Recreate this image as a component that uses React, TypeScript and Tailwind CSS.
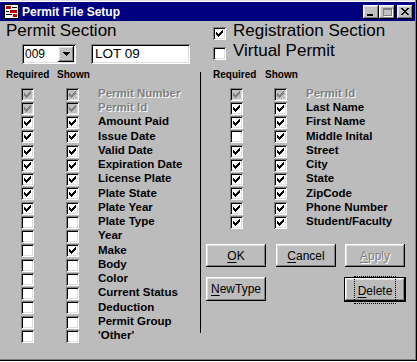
import type { ReactNode } from 'react'

const sunken = 'shadow-[inset_1px_1px_0_#808080,inset_-1px_-1px_0_#fff,inset_2px_2px_0_#000,inset_-2px_-2px_0_#dfdfdf]'
const raised = 'shadow-[inset_-1px_-1px_0_#000,inset_1px_1px_0_#fff,inset_-2px_-2px_0_#808080,inset_2px_2px_0_#dfdfdf]'
const etched = 'text-[#808080] [text-shadow:1px_1px_0_#fff]'

type Row = [string, number, number] // 0 off, 1 on, 2 disabled+checked

const leftRows: Row[] = [
  ['Permit Number', 2, 2],
  ['Permit Id', 2, 2],
  ['Amount Paid', 1, 1],
  ['Issue Date', 1, 1],
  ['Valid Date', 1, 1],
  ['Expiration Date', 1, 1],
  ['License Plate', 1, 1],
  ['Plate State', 1, 1],
  ['Plate Year', 1, 1],
  ['Plate Type', 0, 0],
  ['Year', 0, 0],
  ['Make', 0, 1],
  ['Body', 0, 0],
  ['Color', 0, 0],
  ['Current Status', 0, 0],
  ['Deduction', 0, 0],
  ['Permit Group', 0, 0],
  ["'Other'", 0, 0],
]

const rightRows: Row[] = [
  ['Permit Id', 2, 2],
  ['Last Name', 1, 1],
  ['First Name', 1, 1],
  ['Middle Inital', 0, 1],
  ['Street', 1, 1],
  ['City', 1, 1],
  ['State', 1, 1],
  ['ZipCode', 1, 1],
  ['Phone Number', 1, 1],
  ['Student/Faculty', 1, 1],
]

function Check({ state }: { state: number }) {
  const disabled = state === 2
  return (
    <span className={`block w-[13px] h-[13px] shrink-0 ${disabled ? 'bg-[#c0c0c0]' : 'bg-white'} ${sunken}`}>
      {state > 0 && (
        <svg width="13" height="13" viewBox="0 0 13 13" shapeRendering="crispEdges" fill={disabled ? '#808080' : '#000'}>
          <rect x="9" y="3" width="1" height="1" />
          <rect x="8" y="4" width="2" height="1" />
          <rect x="3" y="5" width="1" height="1" />
          <rect x="7" y="5" width="3" height="1" />
          <rect x="3" y="6" width="2" height="1" />
          <rect x="6" y="6" width="3" height="1" />
          <rect x="3" y="7" width="5" height="1" />
          <rect x="4" y="8" width="3" height="1" />
          <rect x="5" y="9" width="1" height="1" />
        </svg>
      )}
    </span>
  )
}

function FieldRow({ row, i, right }: { row: Row; i: number; right?: boolean }) {
  const [label, req, shown] = row
  return (
    <div className={`flex items-center ${i % 4 === 3 ? 'h-[15px]' : 'h-[14px]'} ${right ? 'pl-[29px]' : 'pl-[21px]'}`}>
      <Check state={req} />
      <span className={right ? 'ml-[31px]' : 'ml-[32px]'}>
        <Check state={shown} />
      </span>
      <span className={`ml-[19px] text-[11.5px] font-bold leading-none whitespace-nowrap ${req === 2 ? etched : 'text-black'}`}>
        {label}
      </span>
    </div>
  )
}

function Header({ right }: { right?: boolean }) {
  return (
    <div className={`flex h-[12px] leading-[12px] text-[10px] font-bold ${right ? 'pl-[12px]' : 'pl-[6px]'}`}>
      <span className={right ? 'w-[52px]' : 'w-[51px]'}>Required</span>
      <span>Shown</span>
    </div>
  )
}

function Btn({ label, disabled, def, tall }: { label: string; disabled?: boolean; def?: boolean; tall?: boolean }) {
  const text = (
    <span className={`text-[12px] leading-none ${disabled ? etched : 'text-black'}`}>
      <span className="underline underline-offset-[2px]">{label[0]}</span>
      {label.slice(1)}
    </span>
  )
  const inner = (
    <div className={`flex items-center justify-center w-[60px] ${tall ? 'h-[24px]' : 'h-[23px]'} bg-[#bcbcbc] ${raised}`}>
      {def ? <span className="border border-dotted border-black px-[3px] py-[1px]">{text}</span> : text}
    </div>
  )
  if (def) return <div className="border border-black">{inner}</div>
  return inner
}

function TitleButton({ children }: { children: ReactNode }) {
  return (
    <div className={`w-[16px] h-[14px] bg-[#c0c0c0] flex items-center justify-center ${raised}`}>{children}</div>
  )
}

function Row2({ checked, children }: { checked: boolean; children: ReactNode }) {
  return (
    <div className="flex items-start h-[20px]">
      <span className="mt-[6px]">
        <Check state={checked ? 1 : 0} />
      </span>
      <span className="ml-[7px] text-[17px] leading-[20px] whitespace-nowrap">{children}</span>
    </div>
  )
}

export default function App() {
  return (
    <div className="w-[417px] h-[361px] bg-[#bcbcbc] pt-[2px] pr-[2px] flex flex-col font-['Liberation_Sans',Arial,sans-serif] text-black shadow-[inset_-1px_-1px_0_#000,inset_-2px_-2px_0_#808080,inset_0_1px_0_#dfdfdf,inset_0_2px_0_#fff]">
      {/* title bar */}
      <div className="h-[19px] bg-[#000080] flex items-center pl-[4px] pr-[2px]">
        <svg width="15" height="15" viewBox="0 0 15 15" shapeRendering="crispEdges">
          <rect x="0" y="0" width="15" height="15" fill="#fff" />
          <rect x="0.5" y="0.5" width="14" height="14" fill="none" stroke="#000" />
          <rect x="2" y="2" width="5" height="3" fill="#c00000" />
          <rect x="8" y="3" width="5" height="1" fill="#000" />
          <rect x="2" y="7" width="3" height="1" fill="#000" />
          <rect x="6" y="6" width="7" height="3" fill="#c00000" />
          <rect x="2" y="10" width="6" height="1" fill="#000" />
          <rect x="9" y="10" width="4" height="3" fill="#c00000" />
        </svg>
        <span className="ml-[3px] text-[12px] font-bold text-white leading-none">Permit File Setup</span>
        <div className="ml-auto flex items-center">
          <TitleButton>
            <span className="block w-[6px] h-[2px] bg-black mt-[6px] -ml-[2px]" />
          </TitleButton>
          <TitleButton>
            <span className="block w-[9px] h-[8px] border border-t-2 border-[#808080] shadow-[1px_1px_0_#fff]" />
          </TitleButton>
          <div className="ml-[2px]">
            <TitleButton>
              <svg width="8" height="7" viewBox="0 0 8 7" shapeRendering="crispEdges" fill="#000">
                <path d="M0 0h2v1h1v1h2V1h1V0h2v1H7v1H6v1H5v1h1v1h1v1h1v1H6V6H5V5H3v1H2v1H0V6h1V5h1V4h1V3H2V2H1V1H0z" />
              </svg>
            </TitleButton>
          </div>
        </div>
      </div>

      {/* top section */}
      <div className="flex">
        <div className="w-[200px] shrink-0">
          <div className="h-[20px] leading-[20px] text-[17px] pl-[6px]">Permit Section</div>
          <div className="flex mt-[3px] pl-[22px]">
            <div className={`w-[54px] h-[20px] bg-white flex items-center pl-[3px] pr-[2px] ${sunken}`}>
              <span className="text-[12px] leading-none flex-1">009</span>
              <div className={`w-[16px] h-[16px] bg-[#c0c0c0] flex items-center justify-center ${raised}`}>
                <svg width="7" height="4" viewBox="0 0 7 4" shapeRendering="crispEdges" fill="#000">
                  <path d="M0 0h7v1H6v1H5v1H4v1H3V3H2V2H1V1H0z" />
                </svg>
              </div>
            </div>
            <div className={`ml-[15px] w-[99px] h-[20px] bg-white flex items-center pl-[4px] ${sunken}`}>
              <span className="text-[13.5px] leading-none">LOT 09</span>
            </div>
          </div>
        </div>
        <div className="pl-[13px]">
          <Row2 checked>Registration Section</Row2>
          <Row2 checked={false}>Virtual Permit</Row2>
        </div>
      </div>

      {/* lists */}
      <div className="flex mt-[5px]">
        <div className="w-[200px] shrink-0">
          <Header />
          <div className="mt-[6px]">
            {leftRows.map((r, i) => (
              <FieldRow key={r[0]} row={r} i={i} />
            ))}
          </div>
        </div>
        <div className="w-px h-[261px] mt-[3px] bg-black shrink-0" />
        <div className="flex-1">
          <Header right />
          <div className="mt-[6px]">
            {rightRows.map((r, i) => (
              <FieldRow key={r[0]} row={r} i={i} right />
            ))}
          </div>
          <div className="pl-[5px] mt-[15px] flex">
            <Btn label="OK" />
            <div className="ml-[10px]">
              <Btn label="Cancel" />
            </div>
            <div className="ml-[9px]">
              <Btn label="Apply" disabled />
            </div>
          </div>
          <div className="pl-[5px] mt-[10px] flex items-start">
            <Btn label="NewType" tall />
            <div className="ml-[78px]">
              <Btn label="Delete" def />
            </div>
          </div>
        </div>
      </div>
    </div>
  )
}
